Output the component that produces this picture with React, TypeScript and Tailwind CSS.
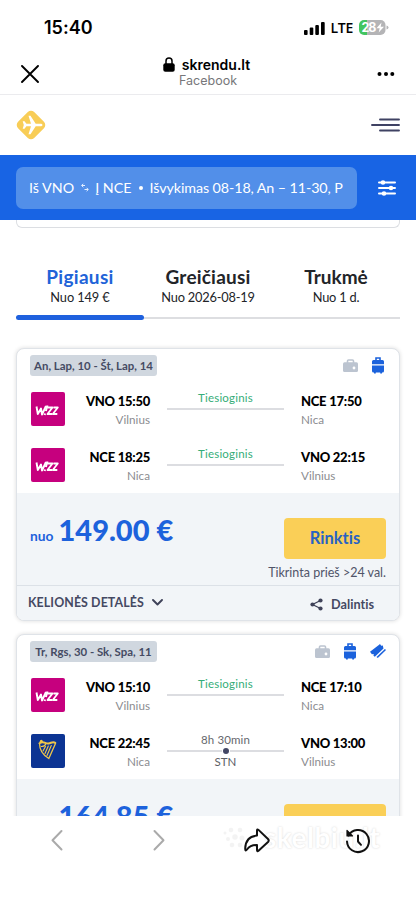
import React from 'react';
import { clsx } from 'clsx';

type AirlineType = 'wizz' | 'ryanair';

interface Leg {
  airline: AirlineType;
  departure: string;
  from: string;
  arrival: string;
  to: string;
  duration?: string;
  stop?: string;
}

interface Flight {
  id: number;
  dates: string;
  price: string;
  priority: boolean;
  legs: Leg[];
}

const tabs = [
  { title: 'Pigiausi', sub: 'Nuo 149 €', titleClass: 'tracking-[0.3px]', subClass: 'tracking-[-0.1px]' },
  { title: 'Greičiausi', sub: 'Nuo 2026-08-19', titleClass: 'tracking-[0.2px]', subClass: 'tracking-[-0.2px]' },
  { title: 'Trukmė', sub: 'Nuo 1 d.', titleClass: 'tracking-[0px]', subClass: 'tracking-[-0.2px]' },
];

const flights: Flight[] = [
  {
    id: 1,
    dates: 'An, Lap, 10 - Št, Lap, 14',
    price: '149.00 €',
    priority: false,
    legs: [
      { airline: 'wizz', departure: 'VNO 15:50', from: 'Vilnius', arrival: 'NCE 17:50', to: 'Nica' },
      { airline: 'wizz', departure: 'NCE 18:25', from: 'Nica', arrival: 'VNO 22:15', to: 'Vilnius' },
    ],
  },
  {
    id: 2,
    dates: 'Tr, Rgs, 30 - Sk, Spa, 11',
    price: '164.85 €',
    priority: true,
    legs: [
      { airline: 'wizz', departure: 'VNO 15:10', from: 'Vilnius', arrival: 'NCE 17:10', to: 'Nica' },
      { airline: 'ryanair', departure: 'NCE 22:45', from: 'Nica', arrival: 'VNO 13:00', to: 'Vilnius', duration: '8h 30min', stop: 'STN' },
    ],
  },
];

function StatusBar() {
  return (
    <div className="h-[53px] shrink-0 flex items-center justify-between pl-[44px] pr-[26px] pt-[3px] text-black">
      <span className="font-['Inter',sans-serif] text-[18px] font-semibold leading-none">15:40</span>
      <div className="flex items-center">
        <svg width="21" height="14" viewBox="0 0 21 14" className="mr-[6px]">
          <rect x="0" y="9" width="3.6" height="5" rx="1" />
          <rect x="5.7" y="6.5" width="3.6" height="7.5" rx="1" />
          <rect x="11.3" y="4" width="3.6" height="10" rx="1" />
          <rect x="17" y="1" width="3.7" height="13" rx="1" />
        </svg>
        <span className="font-['Open_Sans',sans-serif] text-[14px] font-semibold leading-none tracking-[-0.3px] mr-[6px]">LTE</span>
        <svg width="31" height="15" viewBox="0 0 31 15" className="-mt-[1px]">
          <path d="M5 0H10V15H5a5 5 0 0 1-5-5V5a5 5 0 0 1 5-5z" fill="#43c560" />
          <path d="M8 0H21.500a5 5 0 0 1 5 5v5a5 5 0 0 1-5 5H8z" fill="#b4b4b6" />
          <path d="M27.500 5.500q2 .4 2 2t-2 2z" fill="#b4b4b6" />
          <text x="2.500" y="12" fill="#fff" fontFamily="Inter, sans-serif" fontSize="12.500" fontWeight="700" textLength="15">28</text>
          <path d="M22.500 2.500 17.500 8.200h3.200L19.700 12.500 25 6.700h-3.300z" fill="#fff" />
        </svg>
      </div>
    </div>
  );
}

function BrowserHeader() {
  return (
    <div className="h-[42px] shrink-0 flex items-center justify-between pl-[21px] pr-[21px] border-b border-[#ebebee]">
      <svg width="18" height="18" viewBox="0 0 18 18" fill="none" stroke="#000" strokeWidth="1.9" strokeLinecap="round">
        <path d="M1 1 17 17M17 1 1 17" />
      </svg>
      <div className="flex flex-col items-center pb-[3px] font-['Inter',sans-serif]">
        <div className="flex items-center gap-[7px] h-[17px] -ml-[3px]">
          <svg width="12" height="15" viewBox="0 0 12 15">
            <path d="M3 7V4a3 3 0 0 1 6 0v3" fill="none" stroke="#000" strokeWidth="1.500" />
            <rect x="0.300" y="6.300" width="11.400" height="8.400" rx="2" />
          </svg>
          <span className="text-[14px] font-semibold text-black leading-[17px]">skrendu.lt</span>
        </div>
        <span className="text-[12.5px] text-[#77777a] leading-[16px]">Facebook</span>
      </div>
      <svg width="18" height="6" viewBox="0 0 18 6">
        <circle cx="2.500" cy="3" r="2" />
        <circle cx="9" cy="3" r="2" />
        <circle cx="15.300" cy="3" r="2" />
      </svg>
    </div>
  );
}

function SiteHeader() {
  return (
    <div className="h-[60px] shrink-0 flex items-center justify-between px-4">
      <svg width="30" height="30" viewBox="0 0 30 30">
        <rect x="3.600" y="3.600" width="22.800" height="22.800" rx="4.500" fill="#f8cd57" transform="rotate(45 15 15)" />
        <path d="M26.500 15c0-.8-1-1.300-2.200-1.300h-4.600L14.500 5.800h-2l2.500 7.900h-4.600L8.500 11.200H6.700L7.800 15l-1.100 3.800h1.800l1.900-2.500H15L12.500 24.200h2l5.200-7.900h4.600c1.200 0 2.200-.5 2.200-1.300z" fill="#fff" />
      </svg>
      <svg width="29" height="14" viewBox="0 0 29 14" stroke="#3f4263" strokeWidth="1.900" strokeLinecap="round">
        <path d="M9 1.500H28M1 7H28M9 12.500H28" />
      </svg>
    </div>
  );
}

function SearchBar() {
  return (
    <div className="h-[65px] shrink-0 bg-[#1864e4] flex items-center pl-4 pr-5 justify-between">
      <div className="w-[341px] h-[42px] rounded-[7px] bg-[#528fe9] flex items-center pl-[13px] text-white text-[14.3px] whitespace-nowrap">
        <span>Iš VNO</span>
        <svg width="8" height="9" viewBox="0 0 8 9" className="ml-[7px] mr-[6px]" fill="none" stroke="#e6f0ff" strokeWidth="1">
          <path d="M4 2.500H.8M2.300.8.600 2.500l1.700 1.700M3.500 6.500H7M5.600 4.800l1.700 1.700-1.700 1.700" />
        </svg>
        <span>Į NCE</span>
        <span className="mx-[7px] w-[4px] h-[4px] rounded-full bg-white" />
        <span className="tracking-[-0.1px]">Išvykimas 08-18, An – 11-30, P</span>
      </div>
      <svg width="18" height="16" viewBox="0 0 18 16" stroke="#fff" strokeWidth="2" strokeLinecap="round" fill="#fff">
        <path d="M1 2.500H17M1 8H17M1 13.500H17" />
        <circle cx="5" cy="2.500" r="1.300" />
        <circle cx="13" cy="8" r="1.300" />
        <circle cx="6" cy="13.500" r="1.300" />
      </svg>
    </div>
  );
}

function SortTabs() {
  return (
    <div className="mx-4 mt-[30px] grid grid-cols-3 text-center">
      {tabs.map((tab, i) => (
        <div key={tab.title} className="h-[62px] flex flex-col">
          <span className={clsx('text-[19px] leading-[22px] mt-[8px] font-bold', tab.titleClass, i === 0 ? 'text-[#2163d8]' : 'text-[#222428]')}>
            {tab.title}
          </span>
          <span className={clsx('text-[12.8px] leading-[18px] text-[#222428]', tab.subClass)}>{tab.sub}</span>
          <div className="flex-1 flex items-center pt-[9px]">
            <div className={clsx('w-full', i === 0 ? 'h-[4.500px] rounded-full bg-[#1f61de]' : 'h-[2px] bg-[#dddee1]')} />
          </div>
        </div>
      ))}
    </div>
  );
}

function AirlineLogo({ airline }: { airline: AirlineType }) {
  if (airline === 'wizz') {
    return (
      <svg width="34" height="34" viewBox="0 0 34 34" className="shrink-0">
        <rect width="34" height="34" rx="2" fill="#c6007e" />
        <g fill="none" stroke="#fff" strokeWidth="1.900" strokeLinejoin="round">
          <path d="M5.500 14.500l1.300 7.500 3.200-5.500 1 6 4-8.500" />
          <path d="M16.500 13.500l-1.700 5.500M14 21.500l-.4 1.600" strokeWidth="2.100" />
          <path d="M16.500 15.500h5l-5 6.500h4.500M22.500 15.500h4.300l-5 6.500h4.500" strokeWidth="1.800" />
        </g>
      </svg>
    );
  }
  return (
    <svg width="34" height="34" viewBox="0 0 34 34" className="shrink-0">
      <rect width="34" height="34" rx="2" fill="#0c3493" />
      <g fill="none" stroke="#efc64a" strokeLinecap="round">
        <path d="M8.500 9.500C8.500 15 12 21 17.800 24.500L24.500 9.500" strokeWidth="1.300" />
        <path d="M8.500 9.300c4-3 6 .8 9 .2s4.500-2.200 6.800-.6" strokeWidth="2" />
        <path d="M10.300 12.500q3.500 0 4.500-2.500M12 17l2.500-4.500M14 19.500l3.300-7.500M16 21.500l4.300-10" strokeWidth="1.100" />
      </g>
      <circle cx="10.300" cy="7.300" r="1.500" fill="#efc64a" />
    </svg>
  );
}

function HandBagIcon() {
  return (
    <svg width="15" height="13" viewBox="0 0 15 13">
      <path d="M4.500 4V2q0-1 1-1h4q1 0 1 1v2" fill="none" stroke="#bcc4d0" strokeWidth="1.600" />
      <rect x="0" y="3.300" width="15" height="9.700" rx="1.500" fill="#bcc4d0" />
      <circle cx="11" cy="9" r="1.400" fill="#fff" />
    </svg>
  );
}

function SuitcaseIcon() {
  return (
    <svg width="12" height="17" viewBox="0 0 12 17" fill="#1b62dc">
      <path d="M4 4V1h4v3" fill="none" stroke="#1b62dc" strokeWidth="1.600" />
      <path d="M1.500 3h9q1.500 0 1.500 1.500v2.700H0V4.500Q0 3 1.500 3zM0 8.600h12v5.400q0 1.500-1.500 1.500h-9Q0 15.500 0 14z" />
      <path d="M2 15h1.800v1.500H2zM8.200 15H10v1.500H8.200z" />
    </svg>
  );
}

function PriorityIcon() {
  return (
    <svg width="16" height="15" viewBox="0 0 16 15" fill="#1b62dc">
      <path d="M8.500 1.200 10 0l1.200 1.800 1.600-.3.700 3L4.800 12.800 3.500 11.800l.2-1.800-1.800.2L0 7.800z" />
      <path d="M14.900 4.900 16 6 7.800 13.900 6.500 12.900z" />
    </svg>
  );
}

function LegRow({ leg }: { leg: Leg }) {
  return (
    <div className="h-[55.500px] flex pl-[14px]">
      <AirlineLogo airline={leg.airline} />
      <div className="w-[85px] text-right">
        <div className="text-[13px] font-black leading-[18px] text-black tracking-[-0.25px] whitespace-nowrap">{leg.departure}</div>
        <div className="text-[11.7px] leading-[19px] text-[#8b8c90]">{leg.from}</div>
      </div>
      <div className="w-[117px] mx-[17px] flex flex-col items-center">
        <span className={clsx('text-[11.500px] leading-[12px]', leg.duration ? 'text-[#66676d] tracking-[0.1px]' : 'text-[#35ad78] tracking-[0.2px]')}>
          {leg.duration || 'Tiesioginis'}
        </span>
        <div className="w-full h-[10px] flex items-center justify-center">
          <div className="h-[2px] flex-1 bg-[#dcdde1]" />
          {leg.stop && <div className="w-[6px] h-[6px] rounded-full bg-[#434765] mx-[1px]" />}
          {leg.stop && <div className="h-[2px] flex-1 bg-[#dcdde1]" />}
        </div>
        {leg.stop && <span className="text-[11.500px] leading-[12px] text-[#5d5e64]">{leg.stop}</span>}
      </div>
      <div>
        <div className="text-[13px] font-black leading-[18px] text-black tracking-[-0.25px] whitespace-nowrap">{leg.arrival}</div>
        <div className="text-[11.7px] leading-[19px] text-[#8b8c90]">{leg.to}</div>
      </div>
    </div>
  );
}

function FlightCard({ flight }: { flight: Flight }) {
  return (
    <div className="mx-4 mb-[13px] h-[273px] shrink-0 rounded-lg border border-[#dfe3e8] shadow-[0_0_4px_rgba(0,0,0,0.14)] bg-white overflow-hidden flex flex-col">
      <div className="flex justify-between items-start pt-[6px] pl-[13px] pr-[13px] h-[43px] shrink-0">
        <span className="h-[21px] w-[127px] text-center rounded-[3px] bg-[#d0d7df] text-[11.4px] leading-[21px] font-bold text-[#454b63] whitespace-nowrap">
          {flight.dates}
        </span>
        <div className={clsx('flex items-center h-[20px] gap-[14px]', flight.priority ? 'mr-0' : 'mr-[2px]')}>
          <HandBagIcon />
          <SuitcaseIcon />
          {flight.priority && <PriorityIcon />}
        </div>
      </div>
      <div className="h-[101px] shrink-0">
        {flight.legs.map((leg) => <LegRow key={leg.departure} leg={leg} />)}
      </div>
      <div className="h-[92px] shrink-0 bg-[#f2f5f8] flex justify-between pl-[13px] pr-[13px]">
        <div className="flex items-baseline text-[#1d62dc] font-black h-[50px] pt-[19px]">
          <span className="text-[13.8px] font-bold mr-[5px]">nuo</span>
          <span className="text-[29px] leading-[36px] whitespace-nowrap">{flight.price}</span>
        </div>
        <div className="flex flex-col items-end pt-[25px]">
          <button className="w-[102px] h-[41px] rounded-[4px] bg-[#facf57] text-[#2862c4] text-[16.5px] font-bold">Rinktis</button>
          <span className="text-[12.5px] leading-[15px] mt-[6px] text-[#505469] whitespace-nowrap">Tikrinta prieš &gt;24 val.</span>
        </div>
      </div>
      <div className="flex-1 bg-[#f2f5f8] border-t border-[#dce1e7] flex items-center justify-between pl-[11px] pr-[25px] text-[#454963] font-bold">
        <div className="flex items-center gap-[8px] text-[12.4px]">
          <span className="tracking-[0.1px]">KELIONĖS DETALĖS</span>
          <svg width="11" height="7" viewBox="0 0 11 7" fill="none" stroke="#3f4259" strokeWidth="1.900" strokeLinecap="round" strokeLinejoin="round">
            <path d="M1 1l4.500 4.500L10 1" />
          </svg>
        </div>
        <div className="flex items-center gap-[8px] text-[12.7px] pt-[3px]">
          <svg width="13" height="13" viewBox="0 0 13 13" fill="#3f4259">
            <path d="M10.500 2.500 2.500 6.500l8 4" fill="none" stroke="#3f4259" strokeWidth="1.300" />
            <circle cx="10.500" cy="2.500" r="2.100" />
            <circle cx="2.500" cy="6.500" r="2.100" />
            <circle cx="10.500" cy="10.500" r="2.100" />
          </svg>
          <span>Dalintis</span>
        </div>
      </div>
    </div>
  );
}

function BottomBar() {
  return (
    <div className="relative h-[84px] shrink-0 bg-white flex items-start pl-[51px] pt-[12px]">
      <svg width="12" height="24" viewBox="0 0 12 24" fill="none" stroke="#aaa" strokeWidth="2" strokeLinecap="round" strokeLinejoin="round">
        <path d="M10.500 3 1.500 12.200 10.500 21.500" />
      </svg>
      <svg width="12" height="24" viewBox="0 0 12 24" className="ml-[90px]" fill="none" stroke="#aaa" strokeWidth="2" strokeLinecap="round" strokeLinejoin="round">
        <path d="M1.500 3 10.500 12.200 1.500 21.500" />
      </svg>
      {/* watermark */}
      <div className="absolute left-[222px] top-[5px] flex items-center pointer-events-none opacity-60">
        <svg width="24" height="24" viewBox="0 0 24 24" fill="#ececec">
          <circle cx="3" cy="8" r="1.500" />
          <circle cx="9" cy="5" r="2.300" />
          <circle cx="18" cy="5" r="2.300" />
          <circle cx="6" cy="14" r="2" />
          <circle cx="13" cy="12" r="2.700" />
          <circle cx="20" cy="13" r="2.500" />
          <circle cx="10" cy="20" r="2.300" />
          <circle cx="18" cy="20" r="2.300" />
        </svg>
        <span className="ml-[18px] text-[28px] leading-[32px] font-bold text-white tracking-[0.5px] [text-shadow:0_0_2px_#bbb]">skelbiu.lt</span>
      </div>
      <svg width="26" height="26" viewBox="0 0 26 26" className="relative ml-[79px]" fill="none" stroke="#111" strokeWidth="2" strokeLinejoin="round">
        <path d="M14.500 1.900Q13 .6 13 2.600v5C6 8 1.500 12.500 1.200 20.500q0 3.500 1.800 1C5.500 18 8.500 16.800 13 17v5q0 2 1.500.8L24 14q1.400-1.500 0-3z" />
      </svg>
      <svg width="26" height="26" viewBox="0 0 26 26" className="relative ml-[75px]" fill="none" stroke="#111" strokeWidth="2" strokeLinecap="round" strokeLinejoin="round">
        <path d="M3.500 7.500A11 11 0 1 1 2 13.500" />
        <path d="M2 2.500V8h5.500z" fill="#111" strokeWidth="1.200" />
        <path d="M13 7.500v6l3 3.300" />
      </svg>
    </div>
  );
}

export default function App() {
  return (
    <div className="w-full h-[900px] bg-white overflow-hidden flex flex-col font-['Lato',sans-serif] [font-variant-ligatures:none]">
      <StatusBar />
      <BrowserHeader />
      <SiteHeader />
      <SearchBar />
      <div className="h-[596px] shrink-0 overflow-hidden flex flex-col">
        <div className="mx-4 h-[8px] shrink-0 border-x border-b border-[#dcdee2] rounded-b-[6px]" />
        <SortTabs />
        <div className="h-[28px] shrink-0" />
        <div>
          {flights.map((flight) => <FlightCard key={flight.id} flight={flight} />)}
        </div>
      </div>
      <BottomBar />
    </div>
  );
}
